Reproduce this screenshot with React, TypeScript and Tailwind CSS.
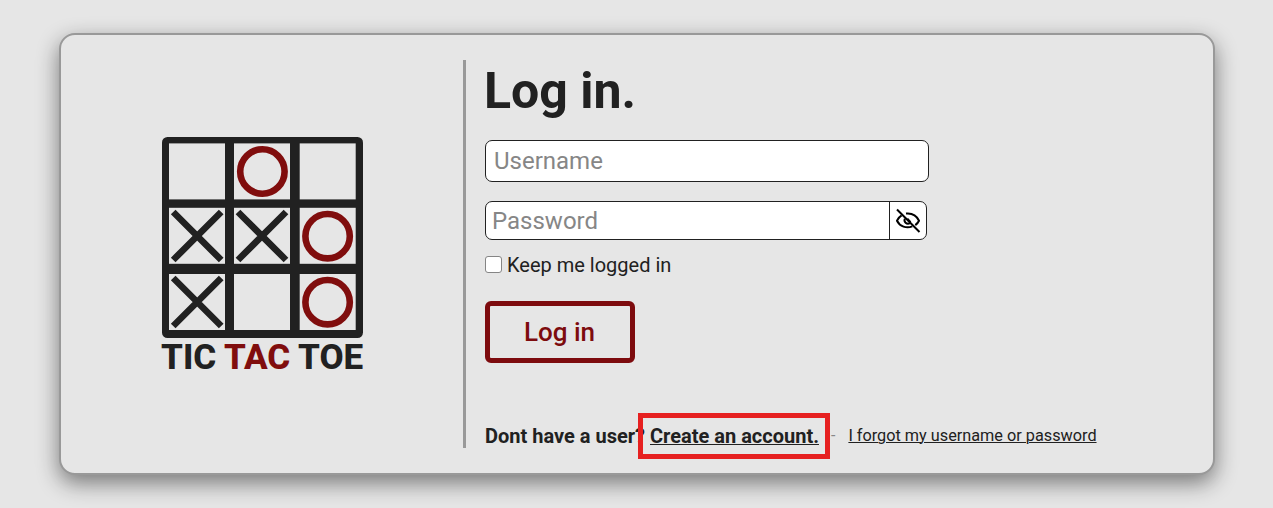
import React from "react";

const cells = [169, 234, 299.7];
const rows = [143.4, 207.8, 274];

function Board() {
  return (
    <svg width="201" height="201" viewBox="162 137 201 201" className="block">
      <rect x="162" y="137" width="201" height="201" rx="5.5" fill="#212121" />
      {rows.map((y) =>
        cells.map((x) => <rect key={`${x}-${y}`} x={x} y={y} width="56" height="56" fill="#e6e6e6" />)
      )}
      <g stroke="#212121" strokeWidth="6.6">
        {[[197.2, 236], [262, 236], [197.2, 302]].map(([x, y]) => (
          <path key={`${x}-${y}`} d={`M${x - 24} ${y - 24}l48 48m0 -48l-48 48`} />
        ))}
      </g>
      <g stroke="#800d0d" strokeWidth="6.6" fill="none">
        <circle cx="262.4" cy="171.5" r="22.2" />
        <circle cx="327.6" cy="236.2" r="22.2" />
        <circle cx="327.6" cy="302.2" r="22.2" />
      </g>
    </svg>
  );
}

function EyeOff() {
  return (
    <svg width="26" height="26" viewBox="0 0 26 26" fill="none" stroke="#000" strokeWidth="2">
      <path d="M2 1.500l22.500 22.500" />
      <path d="M11 5.600C16.500 5 21.500 7.500 24 12.700c-.9 1.900-2 3.200-3.700 4.400" />
      <path d="M6.600 7.300C4.700 8.500 3 10.300 2 12.700c2.800 5.800 9.500 8 15.300 5.600" />
      <path d="M9.900 10.700c-1.500 3 1.700 6.200 5.100 4.500" />
      <path d="M12.500 10.500l3.200 3.500" strokeWidth="1.500" />
    </svg>
  );
}

export default function App() {
  return (
    <div className="h-[508px] w-full overflow-hidden bg-[#e6e6e6] pl-[59px] pt-[33px] font-['Roboto',sans-serif] text-[#212121]">
      <main className="flex h-[442px] w-[1156px] rounded-[16px] border-2 border-[#999999] bg-[#e6e6e6] pt-[25px] shadow-[0_8px_22px_rgba(0,0,0,0.48)]">
        <section className="flex h-[388px] w-[405px] flex-col border-r-[3px] border-[#999999] pl-[101px] pt-[77px]">
          <Board />
          <div className="-ml-px mt-[2px] whitespace-nowrap text-[35px] font-extrabold leading-[36px]">
            TIC <span className="text-[#800d0d]">TAC</span> TOE
          </div>
        </section>
        <form className="flex flex-col items-start pl-[19px]" onSubmit={(e) => e.preventDefault()}>
          <h1 className="-ml-px mt-px text-[50px] font-bold leading-[60px]">Log in.</h1>
          <input
            type="text"
            placeholder="Username"
            className="mt-[19px] h-[42px] w-[444px] rounded-[7px] border border-[#212121] bg-white px-[8px] text-2xl outline-none placeholder:text-[#868686]"
          />
          <div className="mt-[19px] flex h-[39px] w-[442px] overflow-hidden rounded-[7px] border border-[#212121] bg-white">
            <input
              type="password"
              placeholder="Password"
              className="w-[404px] border-r border-[#212121] px-[6px] text-2xl outline-none placeholder:text-[#868686]"
            />
            <button type="button" aria-label="Show password" className="flex flex-1 items-center justify-center">
              <EyeOff />
            </button>
          </div>
          <label className="mt-[10px] flex h-[30px] items-center text-[20px]">
            <input type="checkbox" className="mb-[2px] mr-[5px] size-[17px] appearance-none rounded-[3px] border border-[#858585] bg-white" />
            Keep me logged in
          </label>
          <button type="submit" className="mt-[21px] h-[62px] w-[150px] rounded-[6px] border-5 border-[#7d0b0e] pr-px text-[26px] font-medium text-[#7d0b0e]">
            Log in
          </button>
          <div className="mt-[58px] flex h-[30px] items-center whitespace-nowrap">
            <span className="text-[20px] font-bold">Dont have a user?</span>
            <span className="relative ml-[5px]">
              <a href="#create" className="text-[20px] font-bold underline decoration-1">Create an account.</a>
              <span className="pointer-events-none absolute -left-[12px] -top-[8px] h-[46px] w-[192px] border-5 border-[#e62020]" />
            </span>
            <span className="ml-[12px] text-[#888888]">-</span>
            <a href="#forgot" className="ml-[13px] text-[16.25px] underline decoration-1">I forgot my username or password</a>
          </div>
        </form>
      </main>
    </div>
  );
}
